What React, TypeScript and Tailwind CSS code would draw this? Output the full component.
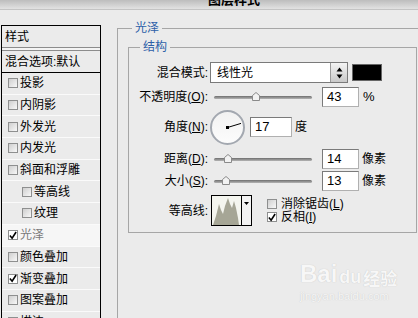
import React from "react";

const Box = ({ checked = false }: { checked?: boolean }) =>
  checked ? (
    <div className="w-[10px] h-[10px] shrink-0 border border-[#8e8f8f] bg-white flex items-center justify-center">
      <svg width="9" height="9" viewBox="0 0 9 9">
        <path d="M1 4.5 L3.5 7.5 L8 0.5" stroke="#000" strokeWidth="1.8" fill="none" />
      </svg>
    </div>
  ) : (
    <div className="w-[10px] h-[10px] shrink-0 border border-[#8e8f8f] bg-gradient-to-br from-[#cfcfcf] to-[#f8f8f8]" />
  );

const items: { t: string; indent?: boolean; checked?: boolean; sel?: boolean }[] = [
  { t: "投影" },
  { t: "内阴影" },
  { t: "外发光" },
  { t: "内发光" },
  { t: "斜面和浮雕" },
  { t: "等高线", indent: true },
  { t: "纹理", indent: true },
  { t: "光泽", checked: true, sel: true },
  { t: "颜色叠加" },
  { t: "渐变叠加", checked: true },
  { t: "图案叠加" },
  { t: "描边" },
];

const Slider = ({ pos }: { pos: number }) => (
  <div className="ml-[6px] w-[98px] h-[12px] relative flex items-center">
    <div className="w-full h-[3px] rounded-full bg-gradient-to-b from-[#6e6e6e] to-[#b5b5b5]" />
    <div className="absolute top-[1px]" style={{ left: pos }}>
      <svg width="8" height="9" viewBox="0 0 8 9">
        <path d="M4 0.5 L7.5 3.5 L7.5 8.5 L0.5 8.5 L0.5 3.5 Z" fill="#f2f2f2" stroke="#8a8a8a" strokeWidth="1" />
      </svg>
    </div>
  </div>
);

const Num = ({ v, w = 37 }: { v: string; w?: number }) => (
  <div
    className="h-[20px] bg-white border border-[#7a7a7a] border-b-[#b0b0b0] border-r-[#b0b0b0] flex items-center pl-[4px] text-[13px] text-black font-['Liberation_Sans',sans-serif]"
    style={{ width: w }}
  >
    {v}
  </div>
);

const U = ({ c }: { c: string }) => <span className="underline">{c}</span>;

export default function App() {
  return (
    <div className="w-[418px] h-[318px] overflow-hidden bg-[#ebebeb] relative font-['Liberation_Sans','Noto_Sans_CJK_SC',sans-serif] text-[12px] text-black">
      {/* title bar */}
      <div className="h-[10px] overflow-hidden bg-gradient-to-b from-[#bdbdbd] to-[#e2e2e2] border-b border-[#c4c4c4]">
        <div className="pl-[208px] mt-[-8px] font-bold text-[13px] leading-[13px] font-['Noto_Sans_CJK_SC',sans-serif]">
          图层样式
        </div>
      </div>

      <div className="flex items-start">
        {/* left panel */}
        <div className="ml-[1px] mt-[15px] w-[100px] shrink-0 border border-black bg-[#ebebeb]">
          <div className="h-[22px] border-b border-[#8c8c8c] flex items-center pl-[3px] leading-none">样式</div>
          <div className="h-[2px] bg-[#f4f4f4]" />
          <div className="h-[1px] bg-[#8c8c8c]" />
          <div className="h-[22px] border-b border-black flex items-center pl-[3px] leading-none">混合选项:默认</div>
          {items.map((it, i) => (
            <div
              key={i}
              className={`h-[21.7px] border-b border-[#fafafa] flex items-center gap-[2px] leading-none ${
                it.indent ? "pl-[20px]" : "pl-[6px]"
              } ${it.sel ? "bg-[#f6f6f6] text-[#7a7a7a]" : ""}`}
            >
              <Box checked={it.checked} />
              <span>{it.t}</span>
            </div>
          ))}
        </div>

        {/* right side: outer group */}
        <div className="ml-[16px] mt-[18px] w-[320px] h-[300px] shrink-0 border-l border-t border-[#a6a6a6]">
          <div className="-mt-[9px] pl-[14px] h-[16px] flex">
            <span className="px-[3px] bg-[#ebebeb] leading-[16px] text-[#2d5fa8]">光泽</span>
          </div>

          {/* inner group */}
          <div className="ml-[10px] mt-[11px] w-[289px] h-[186px] border border-[#a6a6a6]">
            <div className="-mt-[9px] pl-[11px] h-[16px] flex">
              <span className="px-[3px] bg-[#ebebeb] leading-[16px] text-[#2d5fa8]">结构</span>
            </div>

            {/* row 1: blend mode */}
            <div className="mt-[7px] h-[21px] flex items-center">
              <div className="w-[79px] text-right">混合模式:</div>
              <div className="ml-[2px] w-[138px] h-[21px] border border-[#7a7a7a] bg-white flex">
                <div className="flex-1 flex items-center pl-[6px]">线性光</div>
                <div className="w-[17px] h-full border-l border-[#9a9a9a] bg-gradient-to-b from-[#f4f4f4] to-[#c9c9c9] flex items-center justify-center">
                  <svg width="7" height="12" viewBox="0 0 7 12">
                    <path d="M3.5 0.5 L6.5 4.5 L0.5 4.5 Z" fill="#000" />
                    <path d="M3.5 11.5 L6.5 7.5 L0.5 7.5 Z" fill="#000" />
                  </svg>
                </div>
              </div>
              <div className="ml-[4px] w-[30px] h-[17px] bg-black border border-[#666]" />
            </div>

            {/* row 2: opacity */}
            <div className="mt-[4px] h-[20px] flex items-center">
              <div className="w-[79px] text-right">
                不透明度(<U c="O" />):
              </div>
              <Slider pos={38} />
              <div className="ml-[10px]">
                <Num v="43" />
              </div>
              <div className="ml-[4px] text-[13px]">%</div>
            </div>

            {/* row 3: angle */}
            <div className="mt-[3px] h-[34px] flex items-center">
              <div className="w-[79px] text-right">
                角度(<U c="N" />):
              </div>
              <div className="ml-[2px] w-[35px] h-[35px] rounded-full border-2 border-[#a3a8b0] bg-gradient-to-b from-[#f2f2f2] to-[#fcfcfc]">
                <svg width="31" height="31" viewBox="0 0 31 31">
                  <line x1="15.5" y1="15.5" x2="29" y2="11.4" stroke="#000" strokeWidth="1" />
                  <rect x="14" y="14" width="3" height="3" fill="#000" />
                </svg>
              </div>
              <div className="ml-[5px]">
                <Num v="17" w={42} />
              </div>
              <div className="ml-[3px]">度</div>
            </div>

            {/* row 4: distance */}
            <div className="mt-[5px] h-[20px] flex items-center">
              <div className="w-[79px] text-right">
                距离(<U c="D" />):
              </div>
              <Slider pos={10} />
              <div className="ml-[10px]">
                <Num v="14" />
              </div>
              <div className="ml-[3px]">像素</div>
            </div>

            {/* row 5: size */}
            <div className="mt-[2px] h-[20px] flex items-center">
              <div className="w-[79px] text-right">
                大小(<U c="S" />):
              </div>
              <Slider pos={8} />
              <div className="ml-[10px]">
                <Num v="13" />
              </div>
              <div className="ml-[3px]">像素</div>
            </div>

            {/* row 6: contour */}
            <div className="mt-[4px] h-[31px] flex items-center">
              <div className="w-[79px] text-right">等高线:</div>
              <div className="ml-[3px] w-[41px] h-[31px] border border-black bg-[#f4f5ef] flex">
                <div className="w-[29px] h-full">
                  <svg width="29" height="29" viewBox="0 0 29 29">
                    <path
                      d="M1 29 L4 20 L7 8 L9 14 L11 18 L13 10 L16 2 L18 8 L20 12 L22 5 L24 12 L26 22 L27 29 Z"
                      fill="#a6a696"
                    />
                  </svg>
                </div>
                <div className="flex-1 border-l border-black bg-[#f2f2f2] flex justify-center pt-[6px]">
                  <svg width="5" height="3" viewBox="0 0 5 3">
                    <path d="M0 0 L5 0 L2.5 3 Z" fill="#000" />
                  </svg>
                </div>
              </div>
              <div className="ml-[15px] flex flex-col gap-[1px]">
                <div className="flex items-center gap-[4px] h-[12px]">
                  <Box />
                  <span>
                    消除锯齿(<U c="L" />)
                  </span>
                </div>
                <div className="flex items-center gap-[4px] h-[12px]">
                  <Box checked />
                  <span>
                    反相(<U c="I" />)
                  </span>
                </div>
              </div>
            </div>
          </div>
        </div>
      </div>

      {/* watermark */}
      <div className="absolute left-[300px] top-[262px] text-[#f7f7f7] [text-shadow:0_0_1px_#bdbdbd] pointer-events-none">
        <div className="flex items-end font-bold text-[24px] leading-none">
          <span>Bai</span>
          <span className="text-[18px] ml-[2px]">du</span>
          <span className="text-[17px] ml-[2px] font-['Noto_Sans_CJK_SC',sans-serif]">经验</span>
        </div>
        <div className="text-[11px] leading-none mt-[5px]">jingyan.baidu.com</div>
      </div>
    </div>
  );
}
